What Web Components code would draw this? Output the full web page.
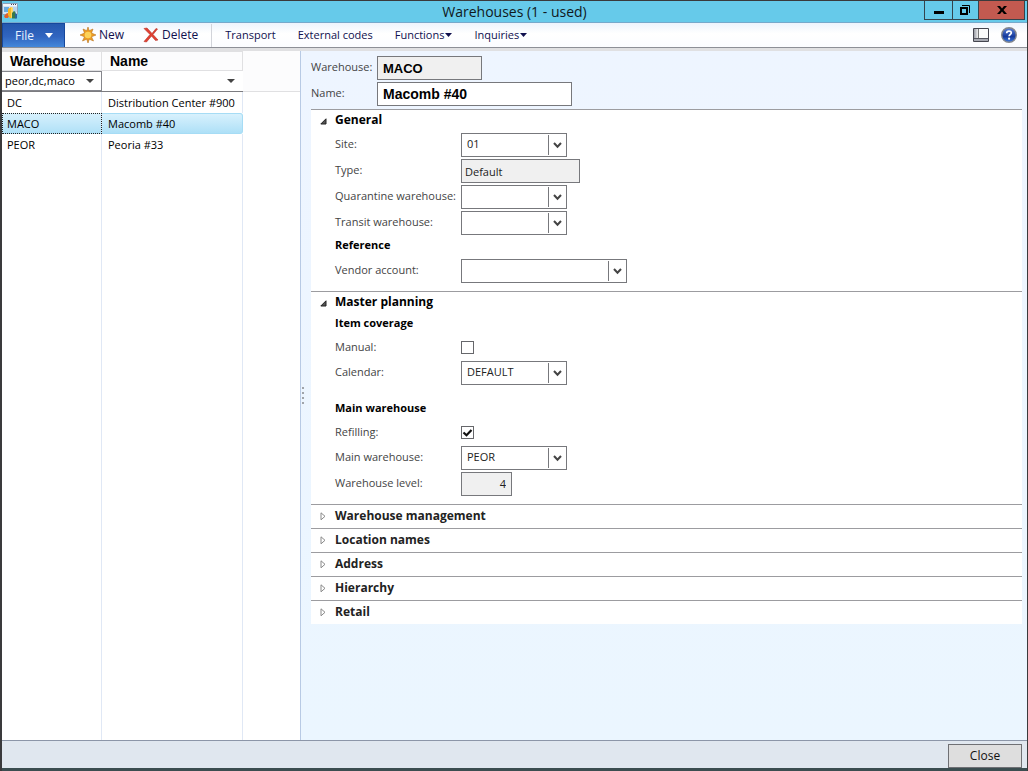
<!DOCTYPE html>
<html lang="en">
<head>
<meta charset="utf-8">
<title>Warehouses</title>
<style>
  html, body { margin: 0; height: 100%; }
  body { font: 11px/16px "Open Sans", "Noto Sans", sans-serif; color: #000; background: #333; }
</style>
</head>
<body>
<app-window>
  <title-bar slot="title" caption="Warehouses (1 - used)"></title-bar>
  <command-bar slot="commands"></command-bar>
  <warehouse-grid slot="list"></warehouse-grid>
  <record-header slot="record">
    <form-field label="Warehouse:" kind="text" value="MACO" width="105" locked strong></form-field>
    <form-field label="Name:" kind="text" value="Macomb #40" width="195" strong></form-field>
  </record-header>
  <fast-tab slot="record" heading="General" open>
    <form-field label="Site:" kind="combo" value="01" width="106"></form-field>
    <form-field label="Type:" kind="text" value="Default" width="119" locked></form-field>
    <form-field label="Quarantine warehouse:" kind="combo" value="" width="106"></form-field>
    <form-field label="Transit warehouse:" kind="combo" value="" width="106"></form-field>
    <field-group>Reference</field-group>
    <form-field label="Vendor account:" kind="combo" value="" width="166"></form-field>
  </fast-tab>
  <fast-tab slot="record" heading="Master planning" open>
    <field-group>Item coverage</field-group>
    <form-field label="Manual:" kind="check"></form-field>
    <form-field label="Calendar:" kind="combo" value="DEFAULT" width="106"></form-field>
    <field-group spaced>Main warehouse</field-group>
    <form-field label="Refilling:" kind="check" checked></form-field>
    <form-field label="Main warehouse:" kind="combo" value="PEOR" width="106"></form-field>
    <form-field label="Warehouse level:" kind="text" value="4" width="51" locked numeric></form-field>
  </fast-tab>
  <fast-tab slot="record" heading="Warehouse management"></fast-tab>
  <fast-tab slot="record" heading="Location names"></fast-tab>
  <fast-tab slot="record" heading="Address"></fast-tab>
  <fast-tab slot="record" heading="Hierarchy"></fast-tab>
  <fast-tab slot="record" heading="Retail"></fast-tab>
  <action-bar slot="actions"></action-bar>
</app-window>

<script>
class BaseElement extends HTMLElement {
  connectedCallback() {
    if (this.shadowRoot) return;
    this.attachShadow({ mode: 'open' }).innerHTML =
      '<style>*{box-sizing:border-box}:host{box-sizing:border-box}' + this.css() + '</style>' + this.html();
    this.ready();
  }
  ready() {}
}

customElements.define('app-window', class extends BaseElement {
  css() { return `
    :host { display: flex; flex-direction: column; min-height: 100vh; border: 1px solid #3a3a3c; border-left-width: 2px; border-bottom: 0; background: #ebf6ff; }
    main { flex: 1; display: flex; border-top: 3px solid #e0e0e2; }
    .list { width: 299px; flex: none; display: flex; border-right: 1px solid #b8cae4; background: #fff; }
    .record { flex: 1; display: flex; min-width: 0; background: linear-gradient(#eef5ff, #ebf6ff); }
    .splitter { width: 10px; display: flex; flex-direction: column; justify-content: center; gap: 3px; padding-left: 1px; }
    .splitter i { width: 2px; height: 2px; background: #a0a4aa; }
    .content { flex: 1; min-width: 0; padding-right: 5px; }
    ::slotted([slot=list]) { flex: 1; }`; }
  html() { return `
    <slot name="title"></slot><slot name="commands"></slot>
    <main>
      <div class="list"><slot name="list"></slot></div>
      <div class="record">
        <div class="splitter"><i></i><i></i><i></i><i></i></div>
        <div class="content"><slot name="record"></slot></div>
      </div>
    </main>
    <slot name="actions"></slot>`; }
});

customElements.define('title-bar', class extends BaseElement {
  css() { return `
    :host { display: grid; grid-template-columns: 1fr auto 1fr; height: 22px; background: #66caea; border-bottom: 1px solid #76a9cb; }
    .icon { display: block; margin-top: 2px; }
    h1 { margin: 0; font-size: 14px; font-weight: 400; line-height: 22px; color: #10181c; }
    .controls { justify-self: end; display: flex; height: 19px; padding-right: 2px; }
    button { margin: 0; padding: 0; height: 19px; border: 1px solid #34444d; border-top: 0; border-right: 0; background: transparent; display: grid; place-items: center; }
    .min svg { margin-bottom: 4px; }
    .min, .max { width: 28px; } .max { width: 26px; }
    .close { width: 47px; background: #c35a50; border-right: 1px solid #34444d; }`; }
  html() { return `
    <svg class="icon" width="16" height="16" viewBox="0 0 16 16" aria-hidden="true">
      <path d="M.5.5h15v11H.5z" fill="#d4e5f5" stroke="#8aa3bb"/>
      <path d="M1 1h14v2H1z" fill="#f4f6f9"/>
      <path d="M9 1.500h1m1 0h1m1 0h1" stroke="#445"/>
      <path d="M2 4h5v5H2z" fill="#69abe0"/><path d="M11 4h4v5h-4z" fill="#b7d3ec"/>
      <path d="M2 13l3-3 3 1-2 4H3z" fill="#e2602a"/>
      <path d="M6 6l3-2 2 1v9l-3 1.500L6 12z" fill="#f9b521"/><path d="M9 4l2 1v9l-2 1z" fill="#fbd765"/>
      <path d="M10 10l2-2 1.500 1v6.500H10z" fill="#397a49"/><path d="M13 10l2 1v4.500h-2z" fill="#28669e"/>
    </svg>
    <h1>${this.getAttribute('caption')}</h1>
    <div class="controls">
      <button class="min" aria-label="Minimize"><svg width="10" height="11"><path d="M0 8h10v3H0z"/></svg></button>
      <button class="max" aria-label="Restore"><svg width="12" height="12"><path d="M1 4h6v6H1z" fill="none" stroke="#000" stroke-width="2"/><path d="M2 1.500h7.500V9" fill="none" stroke="#000"/></svg></button>
      <button class="close" aria-label="Close window"><svg width="10" height="10"><path d="M0 1h3l2 2.500L7 1h3L6.500 5 10 9H7L5 6.500 3 9H0l3.500-4z"/></svg></button>
    </div>`; }
});

customElements.define('command-bar', class extends BaseElement {
  css() { return `
    :host { display: flex; align-items: center; height: 25px; border-bottom: 1px solid #8d8f96; background: linear-gradient(#edf4fd, #fff 45%, #fbfcff); color: #10104e; }
    button { font: inherit; font-size: 12px; color: inherit; background: none; border: 0; margin: 0; padding: 0; height: 24px; display: flex; align-items: center; }
    .file { width: 63px; flex: none; padding-left: 12px; gap: 11px; color: #e9f2ff; background: linear-gradient(#2458ae, #3165c0 55%, #4588da); border: 1px solid #16479c; border-bottom: 0; }
    .new { margin-left: 15px; gap: 3px; }
    .delete { margin-left: 19px; gap: 3px; }
    hr { width: 1px; height: 23px; margin: 0 13px; border: 0; background: #d2d4da; }
    .links { display: flex; gap: 22px; }
    .links button { font-size: 11px; gap: 1px; }
    .tools { margin-left: auto; display: flex; align-items: center; gap: 12px; padding-right: 10px; }`; }
  html() { return `
    <button class="file">File <svg width="8" height="5"><path d="M0 0h8L4 5z" fill="#fff"/></svg></button>
    <button class="new"><svg width="16" height="16" viewBox="0 0 16 16" aria-hidden="true"><path d="M8 0l1.200 3.700L13 2l-1.500 4L16 8l-4.500 1.800L13.500 14l-4.200-1.800L8 16l-1.300-3.800L2.500 14l2-4.200L0 8l4.500-2L3 2l3.800 1.700z" fill="#ee9d23" stroke="#b97320" stroke-width=".6"/><circle cx="8" cy="8" r="3.300" fill="#fdd258"/></svg>New</button>
    <button class="delete"><svg width="16" height="16" viewBox="0 0 16 16" aria-hidden="true"><path d="M1 1.500L4 1l5 5.500L13 1.500l1.500.5L10 7.500l5 5.500-2.500.5L8.500 9 3.500 15 1 14.500 7 7.500z" fill="#e14132" stroke="#b62f25" stroke-width=".6"/></svg>Delete</button>
    <hr>
    <div class="links">
      <button>Transport</button><button>External codes</button>
      <button>Functions<svg width="7" height="5"><path d="M0 0h7L3.500 4z" fill="#10104e"/></svg></button>
      <button>Inquiries<svg width="7" height="5"><path d="M0 0h7L3.500 4z" fill="#10104e"/></svg></button>
    </div>
    <div class="tools">
      <button aria-label="Layout"><svg width="16" height="14" viewBox="0 0 16 14"><defs><linearGradient id="g"><stop stop-color="#999ca5"/><stop offset="1" stop-color="#eee"/></linearGradient></defs><path d="M.5.5h15v13H.5z" fill="#fbfbfb" stroke="#45464f"/><path d="M1 1h4v9H1z" fill="url(#g)"/><path d="M5.500 1v9" stroke="#777"/><path d="M1 11h14v2H1z" fill="#a6a8b0"/><path d="M1 10.500h14" stroke="#55565f"/></svg></button>
      <button aria-label="Help"><svg width="16" height="16" viewBox="0 0 16 16"><defs><linearGradient id="h" x2="0" y2="1"><stop stop-color="#5d83d8"/><stop offset=".6" stop-color="#163a9c"/><stop offset="1" stop-color="#3d7ce0"/></linearGradient></defs><circle cx="8" cy="8" r="7.300" fill="url(#h)" stroke="#83868d" stroke-width="1.400"/><path d="M5.700 6.300c0-3 4.700-2.900 4.600-.3 0 1.500-2.200 1.600-2.200 3.300" fill="none" stroke="#fff" stroke-width="1.700"/><circle cx="8.100" cy="11.700" r="1.100" fill="#fff"/></svg></button>
    </div>`; }
});

customElements.define('warehouse-grid', class extends BaseElement {
  css() { return `
    :host { display: flex; }
    table { width: 100%; border-collapse: separate; border-spacing: 0; table-layout: fixed; line-height: 20px; }
    .c1 { width: 100px; } .c2 { width: 141px; }
    th, td { padding: 0; text-align: left; }
    th { height: 20px; font: bold 14px/18px "Liberation Sans", sans-serif; padding-left: 8px; background: #fcfcfd; border: 1px solid #e0e0e2; border-width: 1px 1px 1px 0; }
    th:last-child { border-color: transparent; }
    .filters td { height: 21px; border-bottom: 1px solid #7c7c80; }
    .filters td:last-child { border-bottom-color: #e0e0e2; background: #fcfcfd; }
    .filter { display: flex; align-items: center; height: 20px; border: 1px solid transparent; border-left: 0; }
    .filter.set { border-color: #85868c; }
    .filter input { flex: 1; min-width: 0; width: 0; font: inherit; color: inherit; border: 0; padding: 0 0 0 3px; background: none; outline: 0; }
    .filter button { width: 22px; height: 16px; padding: 0; border: 0; background: none; display: grid; place-items: center; }
    tbody td { height: 21px; padding-left: 6px; border-right: 1px solid #e0e8f5; white-space: nowrap; }
    tbody td:first-child { padding-left: 5px; }
    td:last-child { border-right: 0 !important; }
    .selected td:nth-child(-n+2) { background: linear-gradient(#d8f1fd, #aee0f7); }
    .selected td:first-child { outline: 1px dotted #222; outline-offset: -1px; }
    .selected td:nth-child(2) { border: 1px solid #a6dcf5; border-left: 0; border-radius: 0 3px 3px 0; line-height: 19px; }
    .rest td { height: auto; }`; }
  html() {
    const arrow = '<svg width="8" height="4"><path d="M0 0h8L4 4z" fill="#444"/></svg>';
    const rows = [['DC', 'Distribution Center #900'], ['MACO', 'Macomb #40'], ['PEOR', 'Peoria #33']];
    return `<table>
      <colgroup><col class="c1"><col class="c2"><col></colgroup>
      <thead>
        <tr><th>Warehouse</th><th>Name</th><th></th></tr>
        <tr class="filters">
          <td><div class="filter set"><input aria-label="Warehouse filter" value="peor,dc,maco"><button aria-label="Warehouse filter options">${arrow}</button></div></td>
          <td><div class="filter"><input aria-label="Name filter"><button aria-label="Name filter options">${arrow}</button></div></td><td></td>
        </tr>
      </thead>
      <tbody>${rows.map((r, i) => `<tr class="${i === 1 ? 'selected' : ''}"><td>${r[0]}</td><td>${r[1]}</td><td></td></tr>`).join('')}
        <tr class="rest"><td></td><td></td><td></td></tr></tbody>
    </table>`;
  }
});

customElements.define('record-header', class extends BaseElement {
  css() { return `:host { display: grid; gap: 2px; padding: 5px 0 3px; --label-width: 66px; }`; }
  html() { return '<slot></slot>'; }
});

customElements.define('field-group', class extends BaseElement {
  css() { return `:host { display: block; font-weight: 700; padding-bottom: 4px; } :host([spaced]) { margin-top: 13px; }`; }
  html() { return '<slot></slot>'; }
});

customElements.define('fast-tab', class extends BaseElement {
  css() { return `
    :host { display: block; background: #fff; border-top: 1px solid #9c9ca0; }
    h2 { margin: 0; font: inherit; }
    button { display: grid; grid-template-columns: 24px auto; justify-content: start; align-items: center; width: 100%; height: 23px; margin: 0; padding: 0 0 1px; border: 0; background: none; font: inherit; font-size: 12px; font-weight: 700; text-align: left; color: #222; }
    :host([open]) button { height: 20px; padding: 0; color: #000; }
    svg { display: block; margin-left: 9px; }
    .body { display: none; }
    :host([open]) .body { display: grid; gap: 2px; padding: 3px 0 8px 24px; --label-width: 126px; }
    .opened, :host([open]) .closed { display: none; }
    :host([open]) .opened { display: block; margin-top: 3px; }`; }
  html() { return `
    <h2><button>
      <svg class="opened" width="7" height="7" viewBox="0 0 7 7"><path d="M6 .8V6H.8z" fill="#555" stroke="#222"/></svg>
      <svg class="closed" width="7" height="9" viewBox="0 0 7 9"><path d="M1 .8v7L5 4.300z" fill="#fff" stroke="#8a8a8a"/></svg>
      ${this.getAttribute('heading')}</button></h2>
    <div class="body"><slot></slot></div>`; }
  ready() {
    const button = this.shadowRoot.querySelector('button');
    button.setAttribute('aria-expanded', this.hasAttribute('open'));
    button.onclick = () => button.setAttribute('aria-expanded', this.toggleAttribute('open'));
  }
});

customElements.define('form-field', class extends BaseElement {
  css() { return `
    :host { display: flex; align-items: center; min-height: 24px; }
    :host([kind=check]) { min-height: 22px; }
    label { flex: none; width: var(--label-width); padding-bottom: 2px; color: #444; white-space: nowrap; }
    .box { position: relative; height: 24px; border: 1px solid #77787c; background: #fff; }
    input.text, select { display: block; width: 100%; height: 22px; margin: 0; border: 0; background: none; font: inherit; color: #222; padding: 0 5px 2px; outline: 0; appearance: none; border-radius: 0; }
    input.text { padding: 0 3px; }
    .box.locked { background: #f0f0f0; }
    .strong input.text { font: bold 14px/20px "Liberation Sans", sans-serif; color: #000; padding-left: 5px; }
    .strong.locked input.text { font-size: 13px; }
    .numeric input.text { text-align: right; padding: 0 5px 2px; }
    .drop { position: absolute; top: 1px; right: 0; width: 18px; height: 20px; border-left: 1px solid #77787c; display: grid; place-items: center; pointer-events: none; }
    .check { appearance: none; width: 13px; height: 13px; margin: 0; border: 1px solid #66676b; background: #fff; display: block; }
    .tick { display: grid; padding-bottom: 2px; }
    .tick > * { grid-area: 1 / 1; }
    .tick svg { pointer-events: none; display: none; }
    .check:checked + svg { display: block; }`; }
  html() {
    const a = n => this.getAttribute(n) || '', has = n => this.hasAttribute(n);
    const label = `<label for="control">${a('label')}</label>`;
    if (a('kind') === 'check') return `${label}<span class="tick"><input id="control" class="check" type="checkbox" ${has('checked') ? 'checked' : ''}><svg width="13" height="13" viewBox="0 0 13 13"><path d="M2.500 6.500L5.500 9.300 10.500 4" fill="none" stroke="#111" stroke-width="2.200"/></svg></span>`;
    if (a('kind') === 'combo') return `${label}<span class="box" style="width:${a('width')}px"><select id="control"><option>${a('value')}</option></select><span class="drop"><svg width="9" height="7"><path d="M1 1l3.500 3.800L8 1" fill="none" stroke="#444" stroke-width="2"/></svg></span></span>`;
    const cls = ['locked', 'strong', 'numeric'].filter(has).join(' ');
    return `${label}<span class="box ${cls}" style="width:${a('width')}px"><input id="control" class="text" value="${a('value')}" ${has('locked') ? 'readonly' : ''}></span>`;
  }
});

customElements.define('action-bar', class extends BaseElement {
  css() { return `
    :host { display: flex; justify-content: flex-end; height: 31px; padding: 3px 5px 0; background: #e0e7ef; border-top: 1px solid #8c96a8; border-bottom: 3px solid #3b4d50; }
    button { width: 74px; height: 24px; margin: 0; padding: 0; border: 1px solid #6f7074; background: #dedede; font: inherit; font-size: 12px; color: #111; }`; }
  html() { return '<button>Close</button>'; }
});
</script>
</body>
</html>
